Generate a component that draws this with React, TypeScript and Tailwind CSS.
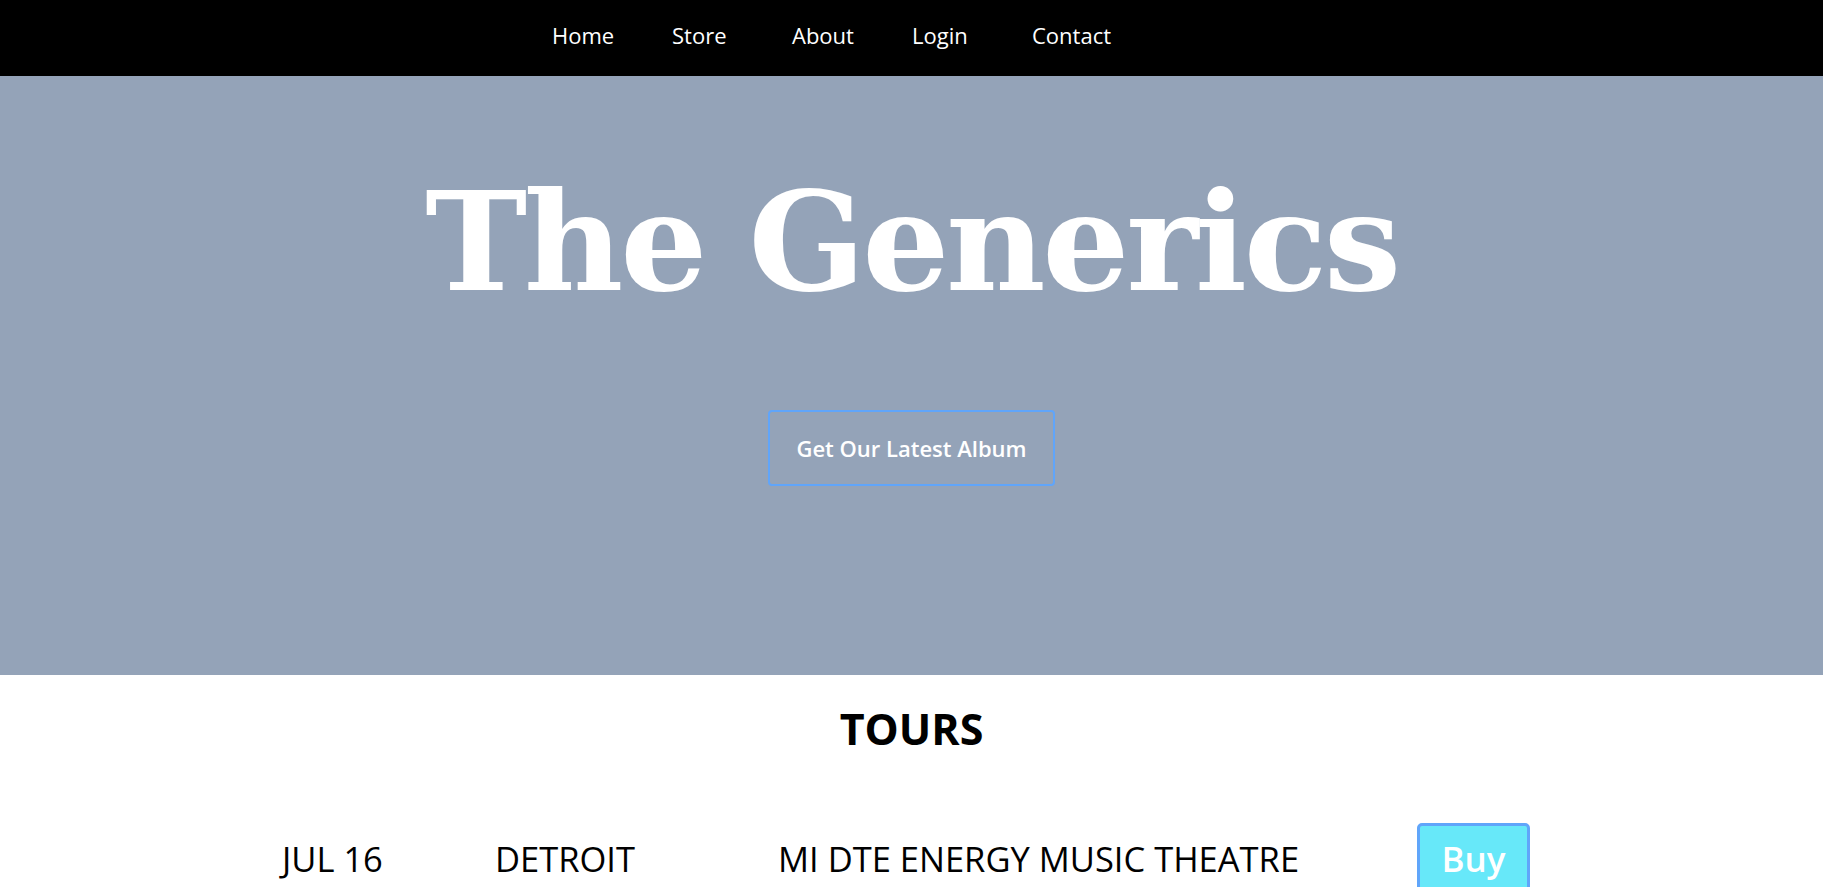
const links = ["Home", "Store", "About", "Login", "Contact"];

export default function App() {
  return (
    <div className="min-h-screen bg-white font-['Open_Sans',sans-serif]">
      <nav className="h-[76px] bg-black">
        <ul className="ml-[552px] flex pt-[24px]">
          {links.map((l) => (
            <li key={l} className="w-[120px]">
              <a href="#" className="text-[22px] leading-none text-white">
                {l}
              </a>
            </li>
          ))}
        </ul>
      </nav>

      <header className="flex h-[599px] flex-col items-center bg-[#94a3b8] pt-[97px]">
        <h1 className="font-['DejaVu_Serif',serif] text-[137px] font-bold leading-none tracking-[-0.024em] text-white">
          The Generics
        </h1>
        <button className="mt-[100px] flex h-[76px] w-[287px] items-center justify-center rounded-[4px] border-2 border-[#60a5fa] text-[22px] font-semibold text-white">
          Get Our Latest Album
        </button>
      </header>

      <section>
        <h2 className="mt-[32px] text-center text-[43px] font-bold leading-none text-black">
          TOURS
        </h2>
        <div className="ml-[282px] mt-[73px] flex items-start text-[34.5px] leading-none text-black">
          <span className="mt-[19px] w-[213px]">JUL 16</span>
          <span className="mt-[19px] w-[283px]">DETROIT</span>
          <span className="mt-[19px] w-[639px]">MI DTE ENERGY MUSIC THEATRE</span>
          <button className="flex h-[70px] w-[113px] items-center justify-center rounded-[5px] border-[3px] border-[#60a5fa] bg-[#67e8f9] text-[35px] font-semibold text-white">
            Buy
          </button>
        </div>
      </section>
    </div>
  );
}
